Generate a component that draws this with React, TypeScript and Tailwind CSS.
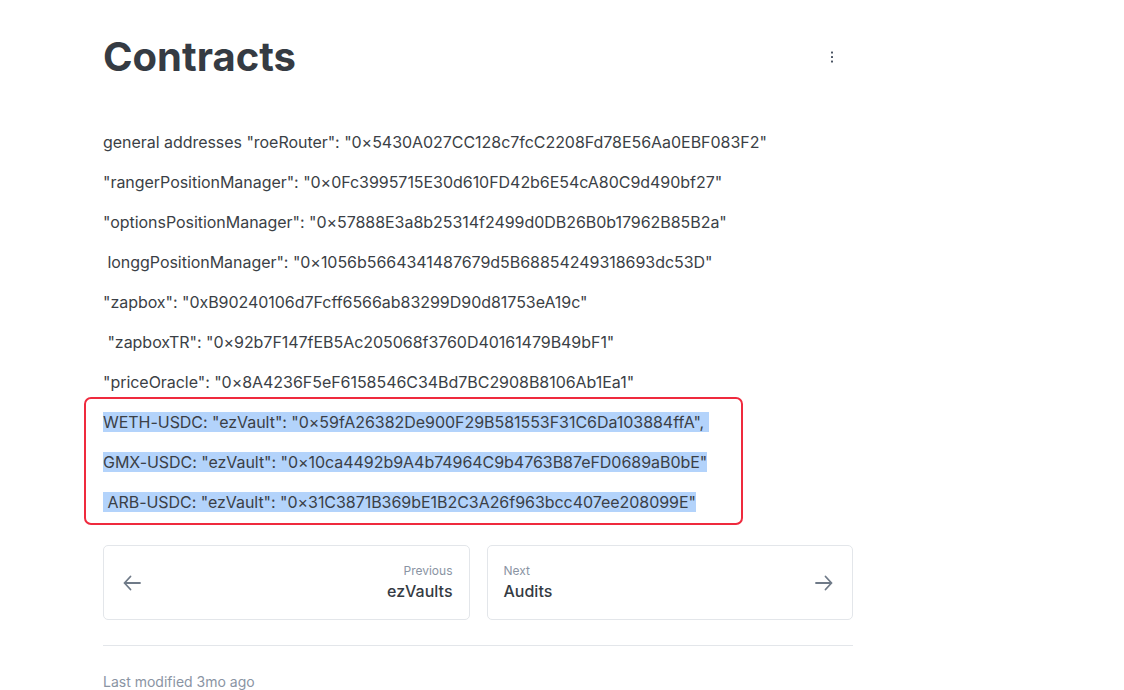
const rows = [
  'general addresses "roeRouter": "0×5430A027CC128c7fcC2208Fd78E56Aa0EBF083F2"',
  '"rangerPositionManager": "0×0Fc3995715E30d610FD42b6E54cA80C9d490bf27"',
  '"optionsPositionManager": "0×57888E3a8b25314f2499d0DB26B0b17962B85B2a"',
  '\u00a0longgPositionManager": "0×1056b5664341487679d5B68854249318693dc53D"',
  '"zapbox": "0xB90240106d7Fcff6566ab83299D90d81753eA19c"',
  '\u00a0"zapboxTR": "0×92b7F147fEB5Ac205068f3760D40161479B49bF1"',
  '"priceOracle": "0×8A4236F5eF6158546C34Bd7BC2908B8106Ab1Ea1"',
];

const selected = [
  'WETH-USDC: "ezVault": "0×59fA26382De900F29B581553F31C6Da103884ffA",\u00a0',
  'GMX-USDC: "ezVault": "0×10ca4492b9A4b74964C9b4763B87eFD0689aB0bE"',
  '\u00a0ARB-USDC: "ezVault": "0×31C3871B369bE1B2C3A26f963bcc407ee208099E"',
];

function Arrow({ dir }: { dir: "left" | "right" }) {
  return (
    <svg
      width="18"
      height="16"
      viewBox="0 0 18 16"
      fill="none"
      stroke="currentColor"
      strokeWidth="1.8"
      strokeLinecap="round"
      strokeLinejoin="round"
      className={dir === "right" ? "rotate-180 text-[#6f7a88]" : "text-[#6f7a88]"}
    >
      <path d="M17 8H1.5M7.5 1.5L1.5 8l6 6.5" />
    </svg>
  );
}

export default function App() {
  return (
    <div className="min-h-screen bg-white font-['Inter',sans-serif] text-[#3b3f46]">
      <div className="ml-[103px] w-[750px] pt-[33px]">
        {/* header */}
        <div className="flex items-center justify-between">
          <h1 className="text-[40px] leading-[48px] font-bold text-[#353b43]">Contracts</h1>
          <button className="mr-[13px] text-[#4a5463]">
            <svg width="16" height="16" viewBox="0 0 16 16" fill="currentColor">
              <rect x="7" y="2.5" width="2" height="2" rx="0.5" />
              <rect x="7" y="7" width="2" height="2" rx="0.5" />
              <rect x="7" y="11.5" width="2" height="2" rx="0.5" />
            </svg>
          </button>
        </div>

        {/* body */}
        <div className="mt-[49px] text-[16px] leading-6 tracking-[-0.04px]">
          {rows.map((r) => (
            <p key={r} className="mb-4 whitespace-pre">{r}</p>
          ))}
          <div className="relative">
            {selected.map((r) => (
              <p key={r} className="mb-4 whitespace-pre">
                <span className="bg-[#b3d3fb]">{r}</span>
              </p>
            ))}
            <div className="pointer-events-none absolute -left-[19px] -top-[13px] h-[128px] w-[659px] rounded-[7px] border-[2.5px] border-[#ef2a3e]" />
          </div>
        </div>

        {/* pagination */}
        <div className="mt-[31px] grid grid-cols-2 gap-[17px]">
          <a className="flex h-[75px] items-center justify-between rounded-[5px] border border-[#e3e6ea] pl-[19px] pr-4">
            <Arrow dir="left" />
            <div className="text-right">
              <div className="text-[12px] leading-4 text-[#8a94a3]">Previous</div>
              <div className="text-[16px] leading-6 font-medium text-[#353b43]">ezVaults</div>
            </div>
          </a>
          <a className="flex h-[75px] items-center justify-between rounded-[5px] border border-[#e3e6ea] pl-4 pr-[19px]">
            <div>
              <div className="text-[12px] leading-4 text-[#8a94a3]">Next</div>
              <div className="text-[16px] leading-6 font-medium text-[#353b43]">Audits</div>
            </div>
            <Arrow dir="right" />
          </a>
        </div>

        <div className="mt-[25px] border-t border-[#e3e6ea]" />
        <div className="mt-[26px] text-[14px] leading-5 text-[#8a94a3]">Last modified 3mo ago</div>
      </div>
    </div>
  );
}
